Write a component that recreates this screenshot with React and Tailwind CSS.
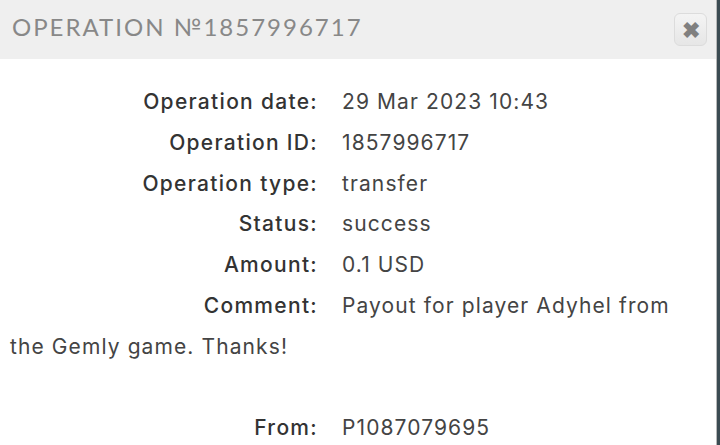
const rows = [
  ["Operation date:", "29 Mar 2023 10:43"],
  ["Operation ID:", "1857996717"],
  ["Operation type:", "transfer"],
  ["Status:", "success"],
  ["Amount:", "0.1 USD"],
  ["Comment:", "Payout for player Adyhel from the Gemly game. Thanks!"],
]

const Row = ({ label, value }) => (
  <div className="leading-[40.8px]">
    <span className="inline-block w-[308px] text-right font-medium tracking-[1.3px] text-[#333]">{label}</span>
    <span className="ml-[24px] tracking-[1.1px] text-[#444]">{value}</span>
  </div>
)

export default function App() {
  return (
    <div className="flex h-[445px] w-[720px] overflow-hidden bg-white font-['Inter',sans-serif]">
      <div className="flex min-w-0 flex-1 flex-col">
        <div className="flex h-[59px] shrink-0 items-start justify-between bg-[#efefef] pl-[12px] pr-[9px]">
          <h1 className="pt-[9px] text-[24px] tracking-[2px] text-[#888] font-['Lato',sans-serif]">OPERATION №1857996717</h1>
          <button className="mt-[13px] flex h-[33px] w-[33px] items-center justify-center rounded-[6px] border border-[#dcdcdc] bg-gradient-to-b from-[#f4f4f4] to-[#e6e6e6] text-[22px] font-bold leading-none text-[#808080]">
            ✖
          </button>
        </div>
        <div className="shrink-0 px-[10px] pt-[23px] text-[21px]">
          {rows.map(([l, v]) => (
            <Row key={l} label={l} value={v} />
          ))}
          <div className="h-[40px]" />
          <Row label="From:" value="P1087079695" />
        </div>
      </div>
      <div className="w-px bg-[#b8b8b8]" />
      <div className="w-[3px] bg-[#3b4b52]" />
    </div>
  )
}
